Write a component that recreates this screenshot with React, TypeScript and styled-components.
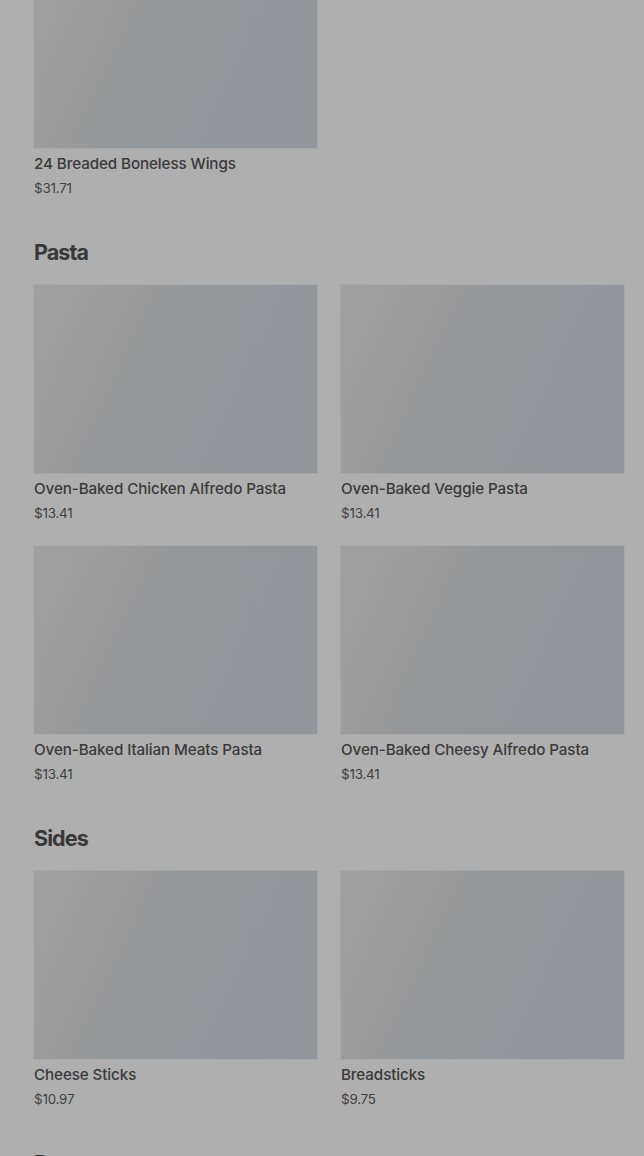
import React from "react";
import styled, { createGlobalStyle } from "styled-components";

type Item = { name: string; price: string };
type Section = { title?: string; items: Item[] };

// the page is scrolled a bit, so the wings card starts above the fold
const sections: Section[] = [
  { items: [{ name: "24 Breaded Boneless Wings", price: "$31.71" }] },
  {
    title: "Pasta",
    items: [
      { name: "Oven-Baked Chicken Alfredo Pasta", price: "$13.41" },
      { name: "Oven-Baked Veggie Pasta", price: "$13.41" },
      { name: "Oven-Baked Italian Meats Pasta", price: "$13.41" },
      { name: "Oven-Baked Cheesy Alfredo Pasta", price: "$13.41" },
    ],
  },
  {
    title: "Sides",
    items: [
      { name: "Cheese Sticks", price: "$10.97" },
      { name: "Breadsticks", price: "$9.75" },
    ],
  },
  { title: "Desserts", items: [] },
];

const GlobalStyle = createGlobalStyle`
  html, body {
    margin: 0;
    padding: 0;
    background: #afafaf;
    overflow: hidden;
  }
  body {
    font-family: Inter, "Liberation Sans", sans-serif;
    color: #3a3a3a;
  }
`;

export default function App() {
  return (
    <>
      <GlobalStyle />
      <Page>
        {sections.map((s, i) => (
          <MenuSection key={i}>
            {s.title && <SectionTitle>{s.title}</SectionTitle>}
            {s.items.length > 0 && (
              <CardGrid>
                {s.items.map((it) => (
                  <Card key={it.name}>
                    <Thumb />
                    <CardName>{it.name}</CardName>
                    <CardPrice>{it.price}</CardPrice>
                  </Card>
                ))}
              </CardGrid>
            )}
          </MenuSection>
        ))}
      </Page>
    </>
  );
}

const Page = styled.main`
  margin-top: -40px;
  padding: 0 20px 0 34px;
  display: flex;
  flex-direction: column;
  gap: 38px;
`;

const MenuSection = styled.section`
  display: flex;
  flex-direction: column;
  gap: 17px;
`;

const SectionTitle = styled.h2`
  margin: 0;
  font-size: 21.5px;
  line-height: 32px;
  font-weight: 700;
  letter-spacing: -0.9px;
  color: #383838;
`;

const CardGrid = styled.div`
  display: grid;
  grid-template-columns: 283px 283px;
  column-gap: 24px;
  row-gap: 23px;
`;

const Card = styled.div`
  display: flex;
  flex-direction: column;
`;

const Thumb = styled.div`
  height: 188px;
  background: linear-gradient(
    115deg,
    #a0a0a0 0%,
    #9d9d9d 22%,
    #99999a 34%,
    #94979a 42%,
    #929599 100%
  );
  box-shadow: 0 0 0 1px #a6a8aa;
`;

const CardName = styled.div`
  margin-top: 5px;
  font-size: 15.2px;
  line-height: 22px;
  font-weight: 500;
  color: #3a3a3a;
  letter-spacing: -0.1px;
`;

const CardPrice = styled.div`
  margin-top: 3px;
  font-size: 13.4px;
  line-height: 20px;
  color: #3f3f3f;
  letter-spacing: -0.2px;
`;
